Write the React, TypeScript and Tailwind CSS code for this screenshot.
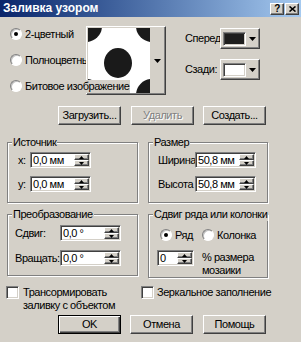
import React from 'react';

const raised =
  'border border-t-white border-l-white border-r-[#404040] border-b-[#404040] shadow-[inset_-1px_-1px_0_#808080]';
const sunken =
  'border border-t-[#808080] border-l-[#808080] border-r-white border-b-white shadow-[inset_1px_1px_0_#404040,inset_-1px_-1px_0_#d4d0c8]';
const etched = 'border border-[#808080] shadow-[inset_1px_1px_0_#fff,1px_1px_0_#fff]';

const DownArrow = ({ w = 7 }: { w?: number }) => (
  <svg width={w} height={Math.ceil(w / 2)} viewBox={`0 0 ${w} ${Math.ceil(w / 2)}`}>
    <polygon points={`0,0 ${w},0 ${w / 2},${Math.ceil(w / 2)}`} fill="#000" />
  </svg>
);

const UpArrow = () => (
  <svg width="5" height="3" viewBox="0 0 5 3">
    <polygon points="0,3 5,3 2.5,0" fill="#000" />
  </svg>
);

const Radio = ({ checked = false }: { checked?: boolean }) => (
  <span className="flex h-[12px] w-[12px] shrink-0 items-center justify-center rounded-full border border-t-[#808080] border-l-[#808080] border-r-white border-b-white bg-white shadow-[inset_1px_1px_0_#c0c0c0]">
    {checked && <span className="h-[4px] w-[4px] rounded-full bg-black" />}
  </span>
);

const Checkbox = () => <span className={`h-[13px] w-[13px] shrink-0 bg-white ${sunken}`} />;

const SpinField = ({ value, width }: { value: string; width: string }) => (
  <div className={`flex h-[16px] ${width} bg-white p-[1px] ${sunken}`}>
    <span className="flex-1 overflow-hidden whitespace-nowrap pl-[1px] leading-[12px]">{value}</span>
    <div className="flex w-[15px] flex-col">
      <div className={`flex h-[6px] items-center justify-center bg-[#d4d0c8] ${raised}`}>
        <UpArrow />
      </div>
      <div className={`flex h-[6px] items-center justify-center bg-[#d4d0c8] ${raised}`}>
        <svg width="5" height="3" viewBox="0 0 5 3">
          <polygon points="0,0 5,0 2.5,3" fill="#000" />
        </svg>
      </div>
    </div>
  </div>
);

const Btn = ({
  children,
  className = '',
  disabled = false,
  isDefault = false,
}: {
  children: React.ReactNode;
  className?: string;
  disabled?: boolean;
  isDefault?: boolean;
}) => (
  <div
    className={`flex h-[19px] w-[63px] items-center justify-center ${
      isDefault
        ? 'border border-black shadow-[inset_1px_1px_0_#fff,inset_-1px_-1px_0_#404040,inset_-2px_-2px_0_#808080]'
        : raised
    } ${className}`}
  >
    <span className={disabled ? 'text-[#808080] [text-shadow:1px_1px_0_#fff]' : ''}>{children}</span>
  </div>
);

const Group = ({
  title,
  className,
  children,
}: {
  title: string;
  className: string;
  children: React.ReactNode;
}) => (
  <div className={`relative shrink-0 ${etched} ${className}`}>
    <span className="absolute -top-[7px] left-[4px] bg-[#d4d0c8] px-[1px] leading-[13px] whitespace-nowrap">
      {title}
    </span>
    {children}
  </div>
);

const ColorBtn = ({ color }: { color: string }) => (
  <div className={`flex h-[21px] w-[40px] items-center ${raised}`}>
    <span className={`ml-[2px] h-[14px] w-[23px] ${sunken}`} style={{ background: color }} />
    <span className="flex flex-1 justify-center">
      <DownArrow />
    </span>
  </div>
);

const App = () => {
  return (
    <div className="h-[342px] w-[301px] overflow-hidden bg-[#d4d0c8] font-['Liberation_Sans',Arial,sans-serif] text-[11px] leading-[13px] tracking-[-0.45px] text-black">
      {/* title bar */}
      <div className="flex h-[17px] items-center bg-linear-to-r from-[#0a246a] to-[#a6caf0] pl-[3px] pr-[2px]">
        <span className="flex-1 text-[12px] font-bold tracking-normal text-white">Заливка узором</span>
        <div className={`flex h-[12px] w-[14px] items-center justify-center bg-[#d4d0c8] ${raised}`}>
          <span className="text-[10px] leading-[10px] font-bold">?</span>
        </div>
        <div className={`ml-[1px] flex h-[12px] w-[14px] items-center justify-center bg-[#d4d0c8] ${raised}`}>
          <svg width="7" height="6" viewBox="0 0 7 6">
            <path d="M0.5 0.5 L6.5 5.5 M6.5 0.5 L0.5 5.5" stroke="#000" strokeWidth="1.6" />
          </svg>
        </div>
      </div>

      {/* pattern type and colours */}
      <div className="flex h-[89px]">
        <div className="flex w-[86px] shrink-0 flex-col pt-[4px] pl-[10px]">
          <label className="flex h-[26px] items-center gap-[3px] whitespace-nowrap">
            <Radio checked />
            <span>2-цветный</span>
          </label>
          <label className="flex h-[26px] items-center gap-[3px] overflow-hidden whitespace-nowrap">
            <Radio />
            <span>Полноцветный</span>
          </label>
          <label className="relative z-10 flex h-[26px] items-center gap-[3px] whitespace-nowrap">
            <Radio />
            <span className="bg-[#d4d0c8] pr-[1px]">Битовое изображение</span>
          </label>
        </div>

        <div className={`mt-[9px] flex h-[69px] w-[80px] shrink-0 items-center p-[1px] ${raised}`}>
          <svg width="62" height="65" viewBox="0 0 62 65" className="shrink-0">
            <rect width="62" height="65" fill="#fff" />
            <circle cx="-2" cy="-2" r="16" fill="#1a1a1a" />
            <circle cx="64" cy="-2" r="16" fill="#1a1a1a" />
            <circle cx="-2" cy="67" r="16" fill="#1a1a1a" />
            <circle cx="64" cy="67" r="16" fill="#1a1a1a" />
            <ellipse cx="30" cy="35" rx="14" ry="15" fill="#1a1a1a" />
          </svg>
          <span className="flex flex-1 justify-center">
            <DownArrow />
          </span>
        </div>

        <div className="mt-[11px] ml-[19px] flex flex-col gap-[10px]">
          <div className="flex items-center">
            <span className="w-[35px] overflow-hidden whitespace-nowrap">Спереди</span>
            <ColorBtn color="#1e1e1e" />
          </div>
          <div className="flex items-center">
            <span className="w-[35px] overflow-hidden whitespace-nowrap">Сзади:</span>
            <ColorBtn color="#ffffff" />
          </div>
        </div>
      </div>

      {/* file buttons */}
      <div className="flex">
        <Btn className="ml-[58px]">Загрузить...</Btn>
        <Btn className="ml-[10px]" disabled>
          Удалить
        </Btn>
        <Btn className="ml-[9px]">Создать...</Btn>
      </div>

      {/* origin / size */}
      <div className="mt-[17px] flex gap-[10px] pl-[7px]">
        <Group title="Источник" className="h-[61px] w-[131px] pt-[9px] pl-[10px]">
          <div className="flex items-center">
            <span className="w-[12px]">x:</span>
            <SpinField value="0,0 мм" width="w-[61px]" />
          </div>
          <div className="mt-[8px] flex items-center">
            <span className="w-[12px]">y:</span>
            <SpinField value="0,0 мм" width="w-[61px]" />
          </div>
        </Group>
        <Group title="Размер" className="h-[61px] w-[120px] pt-[9px] pl-[9px]">
          <div className="flex items-center">
            <span className="w-[37px]">Ширина</span>
            <SpinField value="50,8 мм" width="w-[61px]" />
          </div>
          <div className="mt-[8px] flex items-center">
            <span className="w-[37px]">Высота</span>
            <SpinField value="50,8 мм" width="w-[61px]" />
          </div>
        </Group>
      </div>

      {/* transform / row offset */}
      <div className="mt-[11px] flex items-start gap-[10px] pl-[7px]">
        <Group title="Преобразование" className="h-[62px] w-[131px] pt-[10px] pl-[7px]">
          <div className="flex items-center">
            <span className="w-[45px]">Сдвиг:</span>
            <SpinField value="0,0 °" width="w-[61px]" />
          </div>
          <div className="mt-[9px] flex items-center">
            <span className="w-[45px]">Вращать:</span>
            <SpinField value="0,0 °" width="w-[61px]" />
          </div>
        </Group>
        <Group title="Сдвиг ряда или колонки" className="h-[64px] w-[120px] pt-[14px] pl-[8px]">
          <div className="ml-[3px] flex h-[12px] items-center">
            <label className="flex w-[42px] items-center gap-[3px]">
              <Radio checked />
              <span>Ряд</span>
            </label>
            <label className="flex items-center gap-[3px]">
              <Radio />
              <span>Колонка</span>
            </label>
          </div>
          <div className="mt-[9px] flex items-start">
            <SpinField value="0" width="w-[37px]" />
            <span className="ml-[8px] pt-[1px]">
              % размера
              <br />
              мозаики
            </span>
          </div>
        </Group>
      </div>

      {/* options */}
      <div className="mt-[8px] flex">
        <div className="flex w-[141px] shrink-0 items-start gap-[4px] pl-[6px]">
          <Checkbox />
          <span>
            Трансормировать
            <br />
            заливку с объектом
          </span>
        </div>
        <div className="flex items-start gap-[3px] whitespace-nowrap">
          <Checkbox />
          <span>Зеркальное заполнение</span>
        </div>
      </div>

      {/* dialog buttons */}
      <div className="mt-[3px] flex">
        <Btn className="ml-[58px]" isDefault>
          OK
        </Btn>
        <Btn className="ml-[9px]">Отмена</Btn>
        <Btn className="ml-[10px]">Помощь</Btn>
      </div>
    </div>
  );
};

export default App;
